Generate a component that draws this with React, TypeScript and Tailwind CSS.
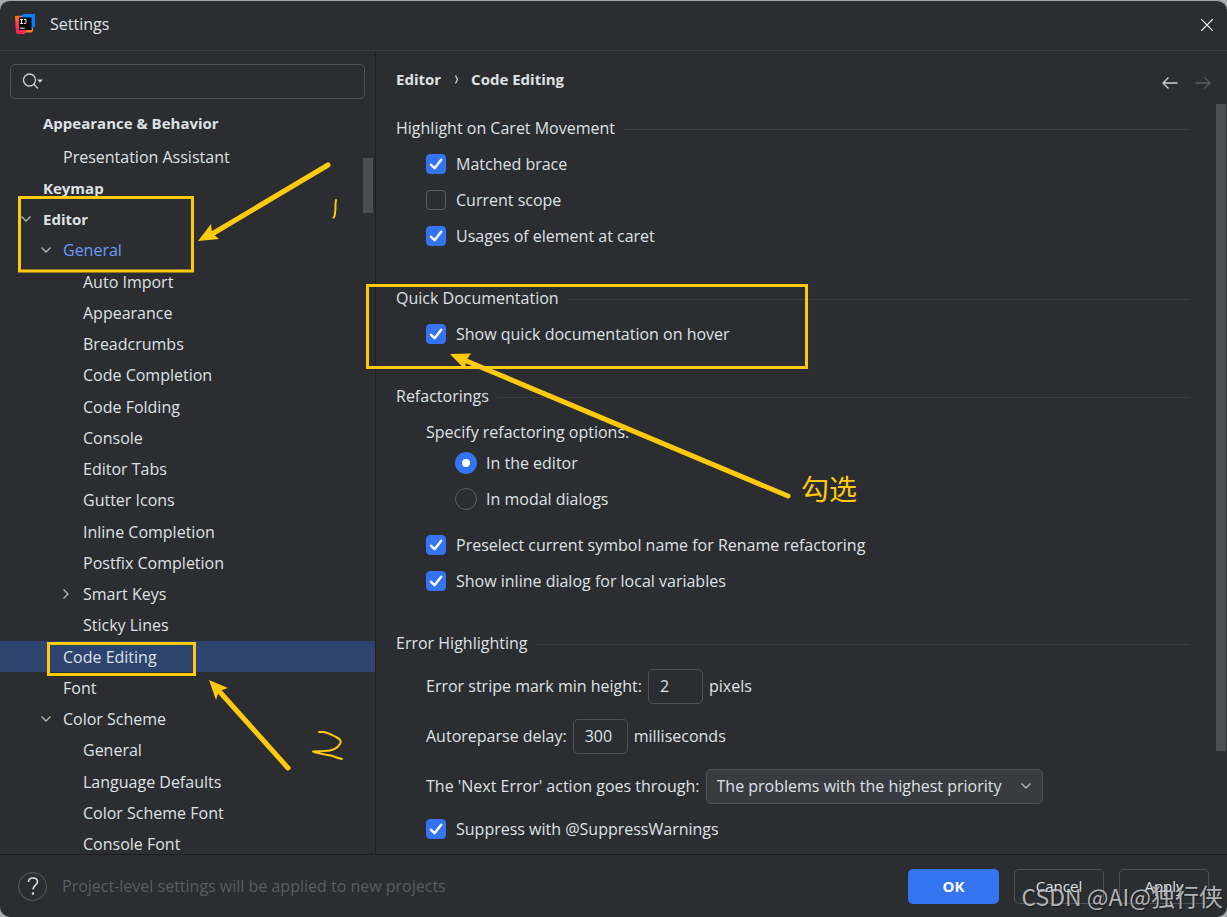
import { useId, useState } from 'react';
import type { ReactNode } from 'react';

type TreeItem = {
  label: string;
  level: 0 | 1 | 2;
  arrow?: 'open' | 'closed';
  link?: boolean;
  selected?: boolean;
};

const tree: TreeItem[] = [
  { label: 'Appearance & Behavior', level: 0 },
  { label: 'Presentation Assistant', level: 1 },
  { label: 'Keymap', level: 0 },
  { label: 'Editor', level: 0, arrow: 'open' },
  { label: 'General', level: 1, arrow: 'open', link: true },
  { label: 'Auto Import', level: 2 },
  { label: 'Appearance', level: 2 },
  { label: 'Breadcrumbs', level: 2 },
  { label: 'Code Completion', level: 2 },
  { label: 'Code Folding', level: 2 },
  { label: 'Console', level: 2 },
  { label: 'Editor Tabs', level: 2 },
  { label: 'Gutter Icons', level: 2 },
  { label: 'Inline Completion', level: 2 },
  { label: 'Postfix Completion', level: 2 },
  { label: 'Smart Keys', level: 2, arrow: 'closed' },
  { label: 'Sticky Lines', level: 2 },
  { label: 'Code Editing', level: 1, selected: true },
  { label: 'Font', level: 1 },
  { label: 'Color Scheme', level: 1, arrow: 'open' },
  { label: 'General', level: 2 },
  { label: 'Language Defaults', level: 2 },
  { label: 'Color Scheme Font', level: 2 },
  { label: 'Console Font', level: 2 },
];

const indent = { 0: 'pl-[19px]', 1: 'pl-[39px]', 2: 'pl-[59px]' };

function Chevron({ closed = false }: { closed?: boolean }) {
  return (
    <svg viewBox="0 0 14 14" className="size-3.5 shrink-0" fill="none" stroke="#b4b8bf" strokeWidth="1.3" aria-hidden="true">
      <path d={closed ? 'M4.5 2.5 9 7l-4.500 4.500' : 'M2.5 4.5 7 9l4.500-4.500'} />
    </svg>
  );
}

function Logo() {
  return (
    <svg viewBox="0 0 20 20" className="size-5" aria-hidden="true">
      <defs>
        <linearGradient id="warm" x1="0" y1="0" x2="0.3" y2="1">
          <stop offset="0" stopColor="#fc801d" />
          <stop offset="0.65" stopColor="#fe2857" />
          <stop offset="1" stopColor="#fe2857" />
        </linearGradient>
      </defs>
      <path fill="#fc801d" d="M9 11h9v6l-1.500 1.500H8z" />
      <path fill="url(#warm)" d="M0 2 8 1.500v12L12 17l-3 3H3l-2-1z" />
      <path fill="#087cfa" d="M6.500 2 8.500 0H20v12l-2 2.500h-6z" />
      <path d="M4 3.500h12.500V16H4z" />
      <path stroke="#fff" strokeWidth="1" fill="none" d="M5.200 5.500h2.800M6.600 5.500v4M5.200 9.500h2.800M9 5.500h2v3q0 1-1 1H8.800M5.200 14.200h4.600" />
    </svg>
  );
}

function Check({ label, defaultChecked = true }: { label: string; defaultChecked?: boolean }) {
  return (
    <label className="flex h-9 items-center gap-2.5 pl-[30px]">
      <span className="grid size-5 shrink-0">
        <input
          type="checkbox"
          defaultChecked={defaultChecked}
          className="peer col-start-1 row-start-1 size-5 appearance-none rounded border border-[#5a5d63] checked:border-[#3574f0] checked:bg-[#3574f0]"
        />
        <svg
          viewBox="0 0 20 20"
          className="pointer-events-none invisible col-start-1 row-start-1 size-5 peer-checked:visible"
          fill="none"
          stroke="#fff"
          strokeWidth="2.4"
          strokeLinecap="round"
          strokeLinejoin="round"
          aria-hidden="true"
        >
          <path d="m5 10.800 3.600 3.400 6.600-8.400" />
        </svg>
      </span>
      {label}
    </label>
  );
}

function Radio({ label, defaultChecked = false }: { label: string; defaultChecked?: boolean }) {
  return (
    <label className="flex h-9 items-center gap-[9px] pl-[59px]">
      <input
        type="radio"
        name="refactoring-options"
        defaultChecked={defaultChecked}
        className="size-[22px] shrink-0 appearance-none rounded-full border border-[#5a5d63] checked:border-[7px] checked:border-[#3574f0] checked:bg-white"
      />
      {label}
    </label>
  );
}

function Section({ title, children }: { title: string; children: ReactNode }) {
  return (
    <section>
      <div className="flex h-[34px] items-center gap-2">
        <h2 className="pb-0.5">{title}</h2>
        <span className="h-px flex-1 bg-[#393b40]" />
      </div>
      {children}
    </section>
  );
}

function NumberField({ label, value, unit }: { label: string; value: string; unit: string }) {
  const id = useId();
  return (
    <div className="flex h-[50px] items-center gap-1.5 pl-[30px]">
      <label htmlFor={id}>{label}</label>
      <input
        id={id}
        defaultValue={value}
        className="h-[35px] w-[55px] rounded-[5px] border border-[#4e5157] bg-transparent px-[11px] outline-none"
      />
      <span>{unit}</span>
    </div>
  );
}

function Annotations() {
  return (
    <svg width="880" height="800" viewBox="0 0 880 800" className="pointer-events-none absolute top-0 left-0" fill="none" stroke="#ffc90e" aria-hidden="true">
      <g strokeWidth="3">
        <path d="M19.500 197.500h173v73.500h-173z" />
        <path d="M48.500 643.500h146v31h-146z" />
        <path d="M367.500 285.500h439v82h-439z" />
      </g>
      <g strokeWidth="5" strokeLinecap="round">
        <path d="M328 165 212 234" />
        <path d="M288 768 219 691" />
        <path d="M788 496 464 360" />
      </g>
      <g fill="#ffc90e" stroke="none">
        <path d="m198 241 13-17 1 9 7 6z" />
        <path d="m209 680 19 8-9 3-3 9z" />
        <path d="m450 354 21-.5-5 7-1 9z" />
      </g>
      <g strokeWidth="2" strokeLinecap="round" strokeLinejoin="round">
        <path d="M336 200c-1 4 0 9-1 13q-.3 4-1.500 4.500" />
        <path d="M319 732h5q6 1.500 12 5c4 2 6 4 4 7-3 5-8 7-15 7l-12 .5c5 2 12 3 18 4 4 1.500 7 2.500 11 3.500" />
      </g>
    </svg>
  );
}

export default function App() {
  const [query, setQuery] = useState('');
  return (
    <div className="relative h-screen bg-[#a9acb0]">
      <div className="flex h-full flex-col overflow-hidden rounded-[10px] border-t border-[#a3a5a8] bg-[#2b2d30] font-['Open_Sans','Noto_Sans_CJK_SC',sans-serif] text-base leading-5 text-[#dfe1e5]">
        <header className="flex h-[50px] shrink-0 items-center border-b border-[#393b40] pr-3.5 pb-[3px] pl-[15px]">
          <Logo />
          <h1 className="flex-1 pl-[15px]">Settings</h1>
          <button type="button" aria-label="Close" className="pt-0.5">
            <svg viewBox="0 0 12 12" className="size-3" stroke="#fff" strokeWidth="1.2" aria-hidden="true">
              <path d="m0 0 12 12M12 0 0 12" />
            </svg>
          </button>
        </header>

        <div className="flex min-h-0 flex-1">
          <aside className="relative flex w-[376px] shrink-0 flex-col border-r border-[#1e1f22]">
            <label className="mx-2.5 mt-[13px] flex h-[35px] shrink-0 items-center rounded-[5px] border border-[#4e5157] pb-0.5 pl-3">
              <svg viewBox="0 0 20 16" className="h-4 w-5" fill="none" stroke="#ced0d6" strokeWidth="1.3" aria-hidden="true">
                <circle cx="6.500" cy="7" r="6" />
                <path d="m11 11.500 4 4" />
                <path d="M14 6.500h6l-3 3.300z" fill="#ced0d6" stroke="none" />
              </svg>
              <input
                aria-label="Search settings"
                value={query}
                onChange={(e) => setQuery(e.target.value)}
                className="min-w-0 flex-1 bg-transparent px-1 outline-none"
              />
            </label>
            <ul className="mt-2 min-h-0 flex-1 overflow-hidden">
              {tree.map((item, i) => (
                <li
                  key={i}
                  className={`flex h-[31px] items-center gap-2.5 first:mb-[3px] nth-[4n+2]:mt-px ${indent[item.level]} ${
                    item.level === 0 ? 'text-[15px] font-bold' : ''
                  } ${item.link ? 'text-[#6b9bfa]' : ''} ${item.selected ? 'bg-[#2e436e]' : ''}`}
                >
                  {item.arrow ? <Chevron closed={item.arrow === 'closed'} /> : <span className="size-3.5 shrink-0" />}
                  {item.label}
                </li>
              ))}
            </ul>
            <div className="absolute top-[107px] right-0.5 h-[55px] w-2.5 bg-[#4d4e51]" />
          </aside>

          <main className="relative min-w-0 flex-1 overflow-hidden pr-[37px] pl-5">
            <div className="-mr-[21px] flex h-[61px] items-center">
              <nav aria-label="Breadcrumb" className="flex flex-1 items-center gap-3 pb-1.5 text-[15px] font-bold">
                <span>Editor</span>
                <svg viewBox="0 0 6 10" className="h-2.5 w-1.5" fill="none" stroke="#ced0d6" strokeWidth="1.3" aria-hidden="true">
                  <path d="m2.500 1.500 2 4-2 4" />
                </svg>
                <span>Code Editing</span>
              </nav>
              <div className="flex gap-[17px] pt-0.5">
                <button type="button" aria-label="Back">
                  <svg viewBox="0 0 16 12" className="h-3 w-4" fill="none" stroke="#ced0d6" strokeWidth="1.3" aria-hidden="true">
                    <path d="M15.500 6H1.500M6.500.5 1 6l5.500 5.500" />
                  </svg>
                </button>
                <button type="button" aria-label="Forward" disabled>
                  <svg viewBox="0 0 16 12" className="h-3 w-4" fill="none" stroke="#5a5b5e" strokeWidth="1.3" aria-hidden="true">
                    <path d="M.5 6h14M9.500.5 15 6l-5.500 5.500" />
                  </svg>
                </button>
              </div>
            </div>

            <div className="flex flex-col gap-7">
              <Section title="Highlight on Caret Movement">
                <Check label="Matched brace" />
                <Check label="Current scope" defaultChecked={false} />
                <Check label="Usages of element at caret" />
              </Section>

              <Section title="Quick Documentation">
                <Check label="Show quick documentation on hover" />
              </Section>

              <Section title="Refactorings">
                <fieldset className="mb-2.5">
                  <legend className="h-[31px] pt-2 pl-[30px]">Specify refactoring options:</legend>
                  <Radio label="In the editor" defaultChecked />
                  <Radio label="In modal dialogs" />
                </fieldset>
                <Check label="Preselect current symbol name for Rename refactoring" />
                <Check label="Show inline dialog for local variables" />
              </Section>

              <Section title="Error Highlighting">
                <NumberField label="Error stripe mark min height:" value="2" unit="pixels" />
                <NumberField label="Autoreparse delay:" value="300" unit="milliseconds" />
                <div className="flex h-[50px] items-center gap-1.5 pl-[30px]">
                  <label htmlFor="next-error">The 'Next Error' action goes through:</label>
                  <div className="grid w-[337px] items-center">
                    <select
                      id="next-error"
                      className="col-start-1 row-start-1 h-[35px] appearance-none rounded-[5px] border border-[#4e5157] bg-[#393b40] pr-8 pl-2.5 outline-none"
                    >
                      <option>The problems with the highest priority</option>
                    </select>
                    <span className="pointer-events-none col-start-1 row-start-1 mr-2.5 justify-self-end">
                      <Chevron />
                    </span>
                  </div>
                </div>
                <Check label="Suppress with @SuppressWarnings" />
              </Section>
            </div>
            <div className="absolute top-[53px] right-px h-[647px] w-2.5 bg-[#4d4e51]" />
          </main>
        </div>

        <footer className="flex h-[63px] shrink-0 items-center gap-[15px] border-t border-[#1e1f22] pr-[18px] pl-[18px]">
          <button type="button" aria-label="Help" className="grid size-[29px] place-items-center rounded-full border border-[#5a5d63]">
            <svg viewBox="0 0 12 18" className="h-[18px] w-3" fill="none" stroke="#dfe1e5" strokeWidth="1.5" aria-hidden="true">
              <path d="M1.500 5C1.500 2.400 3.400 1 6 1s4.500 1.500 4.500 3.800C10.500 8 6 8.400 6 12.500" />
              <circle cx="6" cy="16.500" r="1.200" fill="#dfe1e5" stroke="none" />
            </svg>
          </button>
          <p className="flex-1 text-[#5a5d63]">Project-level settings will be applied to new projects</p>
          <button type="button" className="h-[35px] w-[91px] rounded-[5px] bg-[#3574f0] text-[15px] font-bold text-white">
            OK
          </button>
          <button type="button" className="h-[35px] w-[90px] rounded-[5px] border border-[#4e5157] text-[15px]">
            Cancel
          </button>
          <button type="button" className="h-[35px] w-[90px] rounded-[5px] border border-[#4e5157] text-[15px]">
            Apply
          </button>
        </footer>
      </div>

      <Annotations />
      <span className="pointer-events-none absolute top-[470px] left-[801px] font-['Noto_Sans_CJK_SC',sans-serif] text-[28px] leading-9 text-[#ffc90e]">
        勾选
      </span>
      <span className="pointer-events-none absolute right-1 bottom-[5px] font-['Noto_Sans_CJK_SC',sans-serif] text-2xl whitespace-nowrap text-[#c4c5c7]/90 text-shadow-[1px_1px_1px_#00000066]">
        <span className="text-[23px]">CSDN @AI@</span>独行侠
      </span>
    </div>
  );
}
